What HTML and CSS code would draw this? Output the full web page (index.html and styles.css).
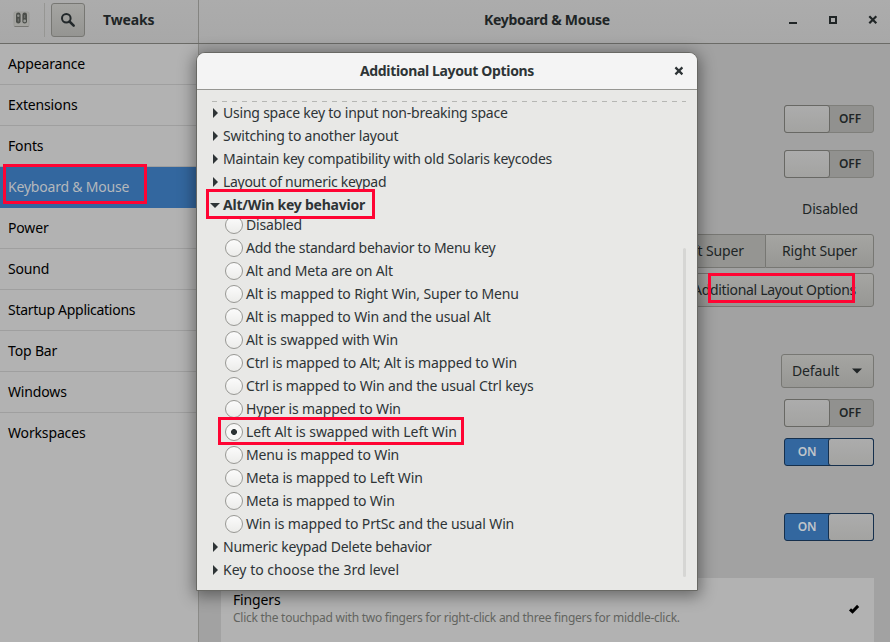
FILE: index.html
```html
<!DOCTYPE html>
<html lang="en">
<head>
<meta charset="utf-8">
<title>Tweaks</title>
<link rel="stylesheet" href="styles.css">
</head>
<body>
<div class="window">
  <header class="bar">
    <div class="bar-left">
      <svg class="app-icon" width="17" height="17" viewBox="0 0 17 17"><rect x="1" y="1" width="15" height="14.5" rx="1.5" fill="#a3a39f" stroke="#9a9a97"/><path d="M1.5 15.5h14" stroke="#777773"/><rect x="3" y="1.5" width="4.6" height="11" rx="2.3" fill="#4b4e4a"/><rect x="9.4" y="1.5" width="4.6" height="11" rx="2.3" fill="#4b4e4a"/><circle cx="5.3" cy="4.7" r="1.2" fill="#8f918d"/><circle cx="11.7" cy="9.9" r="1.4" fill="#999b97"/><path d="M5.3 7.5v3M11.7 4v3" stroke="#747672"/></svg>
      <span class="sep"></span>
      <span class="search"><svg width="16" height="16" viewBox="0 0 16 16" fill="none" stroke="#22282a"><circle cx="6.3" cy="6.3" r="4.3" stroke-width="2"/><path d="M9.5 9.5l4.2 4.2" stroke-width="2.5" stroke-linecap="round"/></svg></span>
      <span class="app-name">Tweaks</span>
    </div>
    <div class="bar-right">
      <span class="page-name">Keyboard &amp; Mouse</span>
      <svg class="controls" width="90" height="16" viewBox="0 0 90 16" fill="none" stroke="#202526"><path d="M1 11h8" stroke-width="2"/><rect x="42" y="5" width="6" height="6" stroke-width="2"/><path d="M81.3 4.3l7 7M88.3 4.3l-7 7" stroke-width="2.2"/></svg>
    </div>
  </header>
  <div class="body">
    <nav class="sidebar">
      <div class="row">Appearance</div>
      <div class="row">Extensions</div>
      <div class="row">Fonts</div>
      <div class="row selected">Keyboard &amp; Mouse</div>
      <div class="row">Power</div>
      <div class="row">Sound</div>
      <div class="row tight">Startup Applications</div>
      <div class="row">Top Bar</div>
      <div class="row">Windows</div>
      <div class="row last">Workspaces</div>
    </nav>
    <main class="panel">
      <div class="switch first"><i></i><b>OFF</b></div>
      <div class="switch second"><i></i><b>OFF</b></div>
      <div class="value">Disabled</div>
      <div class="pair"><span class="button left">Left Super</span><span class="button right">Right Super</span></div>
      <div class="button options">Additional Layout Options</div>
      <div class="button combo">Default<svg width="10" height="6" viewBox="0 0 10 6"><path d="M0 .5h10L5 5.5z" fill="#202526"/></svg></div>
      <div class="switch third"><i></i><b>OFF</b></div>
      <div class="switch on fourth"><b>ON</b><i></i></div>
      <div class="switch on fifth"><b>ON</b><i></i></div>
      <div class="card">
        <div><div class="card-title">Fingers</div><div class="card-text">Click the touchpad with two fingers for right-click and three fingers for middle-click.</div></div>
        <svg width="12" height="10" viewBox="0 0 12 10"><path d="M2 5.4l2.5 2.3 5.6-5.8" fill="none" stroke="#000" stroke-width="3"/></svg>
      </div>
    </main>
  </div>
</div>

<section class="dialog">
  <header class="dialog-bar"><span>Additional Layout Options</span><svg width="10" height="10" viewBox="0 0 10 10"><path d="M1.4 1.4l7 7M8.4 1.4l-7 7" stroke="#2e3436" stroke-width="2.2"/></svg></header>
  <div class="dialog-body">
    <svg class="dashes" width="474" height="1" viewBox="0 0 474 1"><path d="M0 .5h474" stroke="#b6b7b4" stroke-dasharray="5 5"/></svg>
    <div class="group">Using space key to input non-breaking space</div>
    <div class="group">Switching to another layout</div>
    <div class="group">Maintain key compatibility with old Solaris keycodes</div>
    <div class="group tight">Layout of numeric keypad</div>
    <div class="group open">Alt/Win key behavior</div>
    <div class="radios">
      <div class="radio">Disabled</div>
      <div class="radio tight">Add the standard behavior to Menu key</div>
      <div class="radio">Alt and Meta are on Alt</div>
      <div class="radio">Alt is mapped to Right Win, Super to Menu</div>
      <div class="radio">Alt is mapped to Win and the usual Alt</div>
      <div class="radio">Alt is swapped with Win</div>
      <div class="radio">Ctrl is mapped to Alt; Alt is mapped to Win</div>
      <div class="radio">Ctrl is mapped to Win and the usual Ctrl keys</div>
      <div class="radio">Hyper is mapped to Win</div>
      <div class="radio checked wide">Left Alt is swapped with Left Win</div>
      <div class="radio">Menu is mapped to Win</div>
      <div class="radio">Meta is mapped to Left Win</div>
      <div class="radio">Meta is mapped to Win</div>
      <div class="radio">Win is mapped to PrtSc and the usual Win</div>
    </div>
    <div class="group">Numeric keypad Delete behavior</div>
    <div class="group wide">Key to choose the 3rd level</div>
    <span class="scrollbar"></span>
  </div>
</section>

<span class="mark mark-sidebar"></span>
<span class="mark mark-group"></span>
<span class="mark mark-radio"></span>
<span class="mark mark-options"></span>
</body>
</html>
```

FILE: styles.css
```css
* { box-sizing: border-box; }
body {
  margin: 0;
  width: 890px;
  height: 642px;
  overflow: hidden;
  position: relative;
  font: 14px/20px "Noto Sans", "Open Sans", sans-serif;
  letter-spacing: -0.15px;
  color: #202526;
  background: #a2a2a2;
}
svg { display: block; flex: none; }

.window { height: 642px; display: flex; flex-direction: column; }
.bar {
  height: 44px;
  flex: none;
  display: flex;
  background: linear-gradient(#acacac, #a8a8a8);
  border-bottom: 1px solid #6b6b67;
  font-weight: bold;
}
.bar-left {
  width: 199px;
  border-right: 1px solid #848481;
  display: flex;
  align-items: center;
  padding: 0 0 3px 13px;
}
.app-icon { margin-top: -1px; }
.sep { width: 1px; height: 34px; background: #969693; margin: 0 6px 0 14px; }
.search {
  width: 34px;
  height: 34px;
  border: 1px solid #777773;
  border-radius: 3px;
  background: linear-gradient(#a5a5a2, #959592);
  display: grid;
  place-items: center;
}
.app-name { margin-left: 18px; }
.bar-right { flex: 1; display: flex; align-items: center; padding: 0 12px 3px 285px; justify-content: space-between; }
.page-name { white-space: nowrap; letter-spacing: -0.29px; }

.body { flex: 1; display: flex; min-height: 0; }
.sidebar { width: 199px; background: #b2b2b2; border-right: 1px solid #8b8b88; color: #000; }
.row { height: 41px; padding: 10px 8px; border-bottom: 1px solid #9f9f9f; }
.row.selected { background: #33679f; color: #b4b8bc; border-color: #33679f; letter-spacing: -0.2px; }
.row.tight { letter-spacing: -0.28px; }
.row.last { border-bottom: 0; }

.panel { flex: 1; display: flex; flex-direction: column; align-items: flex-end; padding: 61px 16px 0 22px; }
.switch {
  width: 90px;
  height: 28px;
  flex: none;
  display: flex;
  border: 1px solid #7f7f7b;
  border-radius: 3px;
  background: #91918f;
  font-size: 12px;
}
.switch b { flex: 1; text-align: center; line-height: 25px; font-weight: 600; padding-right: 2px; }
.switch i {
  width: 46px;
  margin: -1px;
  border: 1px solid #686864;
  border-radius: 3px;
  background: linear-gradient(#acacac, #a3a3a1);
  flex: none;
}
.switch.on { background: #33679f; border-color: #16304d; color: #c0c5ca; }
.switch.on i { border-color: #16304d; }
.switch.on b { padding: 0; }
.second { margin-top: 17px; }
.value { margin: 21px 16px 0 0; }
.pair { display: flex; margin-top: 15px; }
.button {
  height: 34px;
  flex: none;
  padding: 6px 16px;
  border: 1px solid #777773;
  border-radius: 3px;
  background: linear-gradient(#a5a5a2, #979794);
  white-space: nowrap;
}
.pair .left { width: 110px; padding-left: 22px; background: #959592; border-right: 0; border-radius: 3px 0 0 3px; }
.pair .right { width: 109px; border-radius: 0 3px 3px 0; }
.options { width: 198px; margin-top: 5px; letter-spacing: -0.32px; }
.combo { width: 93px; margin-top: 47px; padding: 6px 11px 6px 10px; display: flex; align-items: center; justify-content: space-between; }
.third { margin-top: 11px; }
.fourth { margin-top: 11px; }
.fifth { margin-top: 47px; }
.card {
  width: 653px;
  height: 64px;
  margin-top: 37px;
  padding: 12px 14px 0 12px;
  background: #b2b2b2;
  display: flex;
  justify-content: space-between;
}
.card svg { margin-top: 14px; }
.card-title { color: #000; }
.card-text { font-size: 12px; line-height: 16px; letter-spacing: -0.26px; color: #62645f; }

.dialog {
  position: absolute;
  left: 196px;
  top: 52px;
  width: 502px;
  height: 539px;
  border: 1px solid #686864;
  border-radius: 9px 9px 0 0;
  background: #e8e8e6;
  color: #2e3436;
  box-shadow: 0 3px 16px 2px rgba(0, 0, 0, .42);
  overflow: hidden;
}
.dialog-bar {
  height: 37px;
  background: #f4f4f4;
  border-bottom: 1px solid #969692;
  display: flex;
  align-items: center;
  justify-content: space-between;
  padding: 0 13px 0 163px;
  font-weight: bold;
  letter-spacing: -0.35px;
}
.dialog-body { position: relative; padding: 11px 0 0 15px; }
.dashes { margin-bottom: -1px; }
.group {
  height: 23px;
  padding-left: 11px;
  display: flex;
  align-items: center;
  position: relative;
  white-space: nowrap;
  letter-spacing: -0.22px;
}
.group::before {
  content: "";
  position: absolute;
  left: 1px;
  top: 7px;
  border: solid transparent;
  border-width: 5px 0 5px 5.5px;
  border-left-color: #2e3436;
}
.group.tight { letter-spacing: -0.3px; }
.group.wide { letter-spacing: 0.02px; }
.group.open { font-weight: bold; }
.group.open::before { left: -2px; top: 10px; border-width: 5px 5px 0; border-color: #2e3436 transparent transparent; }
.radios { margin-top: -3px; }
.radio { height: 23px; padding-left: 14px; display: flex; align-items: center; gap: 4px; white-space: nowrap; }
.radio.tight { letter-spacing: -0.29px; }
.radio.wide { letter-spacing: -0.06px; }
.radio::before {
  content: "";
  width: 16px;
  height: 16px;
  margin-left: -1px;
  margin-right: -1px;
  flex: none;
  border: 1px solid #989894;
  border-radius: 50%;
  background: linear-gradient(#fbfbfb, #ececea);
}
.radio.checked::before { background: radial-gradient(circle, #2e3436 2.6px, transparent 3.3px), #f8f8f7; }
.scrollbar { position: absolute; left: 486px; top: 158px; width: 3px; height: 329px; border-radius: 2px; background: #d6d6d4; }

.mark { position: absolute; border: 3px solid #ff0433; }
.mark-sidebar { left: 3px; top: 164px; width: 144px; height: 40px; }
.mark-group { left: 206px; top: 189px; width: 169px; height: 30px; }
.mark-radio { left: 218px; top: 417px; width: 246px; height: 28px; }
.mark-options { left: 708px; top: 273px; width: 147px; height: 30px; }
```
